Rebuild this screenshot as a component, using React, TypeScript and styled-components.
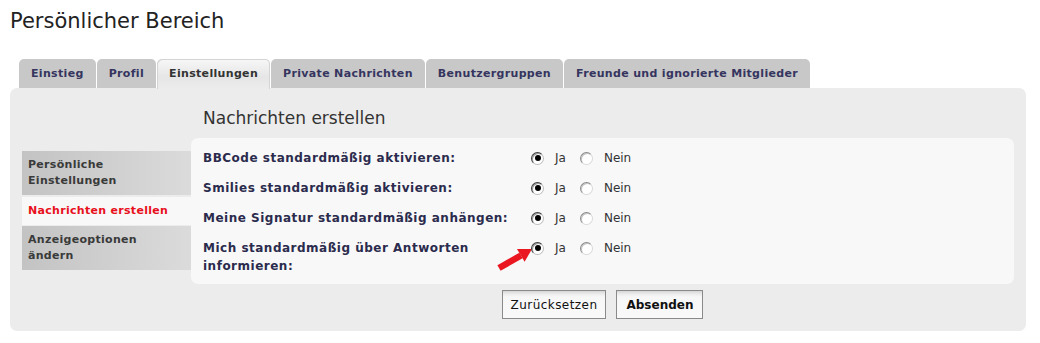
import React from "react";
import styled, { createGlobalStyle } from "styled-components";

const GlobalStyle = createGlobalStyle`
  body {
    margin: 0;
    background: #ffffff;
    font-family: "DejaVu Sans", Verdana, sans-serif;
  }
`;

const Page = styled.div`
  padding: 0 14px 12px 10px;
`;

const Title = styled.h1`
  margin: 8px 0 25px 0;
  font-size: 21px;
  line-height: 26px;
  font-weight: normal;
  color: #222222;
`;

const TabBar = styled.ul`
  display: flex;
  gap: 1px;
  margin: 0 0 0 9px;
  padding: 0;
  list-style: none;
  position: relative;
  z-index: 1;
`;

const Tab = styled.li<{ $active?: boolean }>`
  height: ${(p) => (p.$active ? "30px" : "29px")};
  margin-bottom: ${(p) => (p.$active ? "-1px" : "0")};
  padding: 0 12px;
  line-height: 29px;
  font-size: 11px;
  font-weight: bold;
  letter-spacing: 0.33px;
  border-radius: 5px 5px 0 0;
  color: ${(p) => (p.$active ? "#333333" : "#35355f")};
  background: ${(p) =>
    p.$active
      ? "linear-gradient(to bottom, #f7f7f7 0%, #e6e6e6 60%, #ececec 100%)"
      : "#c8c8c8"};
  box-shadow: ${(p) => (p.$active ? "inset 1px 1px 0 #d4d4d4, inset -1px 0 0 #d4d4d4" : "none")};
  white-space: nowrap;
`;

const Panel = styled.div`
  display: flex;
  background: #ececec;
  border-radius: 7px;
  padding: 0 12px 12px 12px;
`;

const Menu = styled.ul`
  width: 169px;
  margin: 63px 0 0 0;
  padding: 0;
  list-style: none;
  display: flex;
  flex-direction: column;
  gap: 1px;
`;

const MenuItem = styled.li<{ $active?: boolean }>`
  padding: 6px 6px;
  line-height: 16px;
  font-size: 11px;
  font-weight: bold;
  letter-spacing: 0.3px;
  color: ${(p) => (p.$active ? "#e8101c" : "#3a3a3a")};
  background: ${(p) =>
    p.$active ? "#f8f8f8" : "linear-gradient(to right, #c3c3c3, #dbdbdb)"};
  margin-top: ${(p) => (p.$active ? "1px" : "0")};
`;

const Main = styled.div`
  flex: 1;
  padding-top: 19px;
`;

const Heading = styled.h2`
  margin: 0 0 9px 0;
  padding-left: 12px;
  font-size: 17px;
  line-height: 22px;
  font-weight: normal;
  color: #333333;
`;

const Box = styled.div`
  background: #f8f8f8;
  border-radius: 7px;
  padding: 5px 0 3px 0;
`;

const Row = styled.div`
  display: grid;
  grid-template-columns: 328px auto;
  align-items: start;
  padding: 6px 12px;
  line-height: 18px;
`;

const Label = styled.div`
  font-size: 12px;
  font-weight: bold;
  letter-spacing: 0.5px;
  color: #2b2b4d;
`;

const Options = styled.div`
  position: relative;
  display: flex;
  align-items: center;
  gap: 14px;
  height: 18px;
`;

const Option = styled.label`
  display: flex;
  align-items: center;
  font-size: 12px;
  color: #333333;
`;

const Radio = styled.span<{ $checked?: boolean }>`
  position: relative;
  display: inline-block;
  box-sizing: border-box;
  width: 13px;
  height: 13px;
  margin-right: 11px;
  border-radius: 50%;
  border: 1px solid;
  border-color: ${(p) =>
    p.$checked
      ? "#3c3c3c #bdbdbd #bdbdbd #3c3c3c"
      : "#8a8a8a #d8d8d8 #d8d8d8 #8a8a8a"};
  background: #ffffff;
  box-shadow: inset 1px 1px 0 ${(p) => (p.$checked ? "#9a9a9a" : "#c4c4c4")};

  &::after {
    content: "";
    display: ${(p) => (p.$checked ? "block" : "none")};
    position: absolute;
    left: 2.5px;
    top: 2.5px;
    width: 6px;
    height: 6px;
    border-radius: 50%;
    background: #000000;
  }
`;

const Pointer = styled.svg`
  position: absolute;
  left: -35px;
  top: 8px;
`;

const Buttons = styled.div`
  display: flex;
  justify-content: center;
  gap: 10px;
  margin-top: 6px;
`;

const Button = styled.button<{ $primary?: boolean }>`
  height: 29px;
  padding: 0 ${(p) => (p.$primary ? "9px" : "8px")};
  border: 1px solid #8a8a8a;
  border-radius: 0;
  background: linear-gradient(to bottom, #d6d6d6 0px, #ececec 3px, #f7f7f7 6px, #f9f9f9 100%);
  font-family: "DejaVu Sans", Verdana, sans-serif;
  font-size: 12px;
  letter-spacing: ${(p) => (p.$primary ? "0" : "0.45px")};
  font-weight: ${(p) => (p.$primary ? "bold" : "normal")};
  color: #111111;
`;

const tabs = [
  "Einstieg",
  "Profil",
  "Einstellungen",
  "Private Nachrichten",
  "Benutzergruppen",
  "Freunde und ignorierte Mitglieder",
];

const settings = [
  "BBCode standardmäßig aktivieren:",
  "Smilies standardmäßig aktivieren:",
  "Meine Signatur standardmäßig anhängen:",
  "Mich standardmäßig über Antworten informieren:",
];

function Arrow() {
  return (
    <Pointer width="38" height="26" viewBox="0 0 38 26">
      <line x1="3" y1="21" x2="25" y2="8.5" stroke="#ea1620" strokeWidth="6.5" />
      <polygon points="36,2 28.6,14.8 21,2" fill="#ea1620" />
    </Pointer>
  );
}

export default function App() {
  return (
    <Page>
      <GlobalStyle />
      <Title>Persönlicher Bereich</Title>
      <TabBar>
        {tabs.map((t) => (
          <Tab key={t} $active={t === "Einstellungen"}>
            {t}
          </Tab>
        ))}
      </TabBar>
      <Panel>
        <Menu>
          <MenuItem>
            Persönliche
            <br />
            Einstellungen
          </MenuItem>
          <MenuItem $active>Nachrichten erstellen</MenuItem>
          <MenuItem>
            Anzeigeoptionen
            <br />
            ändern
          </MenuItem>
        </Menu>
        <Main>
          <Heading>Nachrichten erstellen</Heading>
          <Box>
            {settings.map((s, i) => (
              <Row key={s}>
                <Label>{s}</Label>
                <Options>
                  {i === settings.length - 1 && <Arrow />}
                  <Option>
                    <Radio $checked />
                    Ja
                  </Option>
                  <Option>
                    <Radio />
                    Nein
                  </Option>
                </Options>
              </Row>
            ))}
          </Box>
          <Buttons>
            <Button>Zurücksetzen</Button>
            <Button $primary>Absenden</Button>
          </Buttons>
        </Main>
      </Panel>
    </Page>
  );
}
